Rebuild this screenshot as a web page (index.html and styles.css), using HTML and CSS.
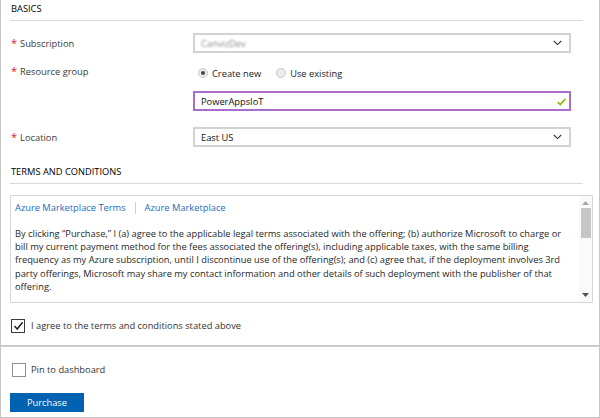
FILE: index.html
```html
<!DOCTYPE html>
<html lang="en">
<head>
<meta charset="utf-8">
<title>Create</title>
<link rel="stylesheet" href="styles.css">
</head>
<body>
<div class="blade">
  <section class="upper">
    <h2 class="section-title">BASICS</h2>
    <div class="form">
      <div class="row row-sub">
        <label class="lbl"><span class="req">*</span>Subscription</label>
        <div class="select">
          <span class="blur">CanvizDev</span>
          <svg class="chev" width="9" height="6" viewBox="0 0 9 6"><polyline points="0.8,1 4.5,4.6 8.2,1" fill="none" stroke="#333" stroke-width="1.1"/></svg>
        </div>
      </div>
      <div class="row row-rg">
        <label class="lbl"><span class="req">*</span>Resource group</label>
        <div class="ctl">
          <div class="radios">
            <span class="radio on"></span><span class="radio-text">Create new</span>
            <span class="radio"></span><span class="radio-text">Use existing</span>
          </div>
          <div class="input valid">
            <span>PowerAppsIoT</span>
            <svg class="ok" width="9" height="8" viewBox="0 0 9 8"><polyline points="0.8,4.2 3.3,6.6 8.3,1" fill="none" stroke="#7fba00" stroke-width="1.6"/></svg>
          </div>
        </div>
      </div>
      <div class="row row-loc">
        <label class="lbl"><span class="req">*</span>Location</label>
        <div class="select">
          <span>East US</span>
          <svg class="chev" width="9" height="6" viewBox="0 0 9 6"><polyline points="0.8,1 4.5,4.6 8.2,1" fill="none" stroke="#333" stroke-width="1.1"/></svg>
        </div>
      </div>
    </div>
    <h2 class="section-title terms-title">TERMS AND CONDITIONS</h2>
    <div class="terms-box">
      <div class="terms-content">
        <div class="links"><a class="link">Azure Marketplace Terms</a><span class="link-sep"></span><a class="link">Azure Marketplace</a></div>
        <p class="terms-text">By clicking “Purchase,” I (a) agree to the applicable legal terms associated with the offering; (b) authorize Microsoft to charge or bill my current payment method for the fees associated the offering(s), including applicable taxes, with the same billing frequency as my Azure subscription, until I discontinue use of the offering(s); and (c) agree that, if the deployment involves 3rd party offerings, Microsoft may share my contact information and other details of such deployment with the publisher of that offering.</p>
      </div>
      <div class="scrollbar">
        <svg class="arrow up" width="7" height="4" viewBox="0 0 7 4"><polygon points="0,4 7,4 3.5,0" fill="#a6a6a6"/></svg>
        <div class="thumb"></div>
        <div class="track-fill"></div>
        <svg class="arrow down" width="7" height="4" viewBox="0 0 7 4"><polygon points="0,0 7,0 3.5,4" fill="#505050"/></svg>
      </div>
    </div>
    <label class="check agree">
      <span class="box checked"><svg width="11" height="10" viewBox="0 0 11 10"><polyline points="1.5,5 4.2,8 9.6,1.2" fill="none" stroke="#222" stroke-width="1.5"/></svg></span>
      <span>I agree to the terms and conditions stated above</span>
    </label>
  </section>
  <section class="lower">
    <label class="check pin">
      <span class="box"></span>
      <span>Pin to dashboard</span>
    </label>
    <button class="purchase">Purchase</button>
  </section>
</div>
</body>
</html>
```
FILE: styles.css
```css
* { box-sizing: border-box; margin: 0; padding: 0; }
body {
  margin: 0;
  width: 600px;
  height: 418px;
  overflow: hidden;
  background: #fff;
  font-family: "Open Sans", "Noto Sans", sans-serif;
  font-size: 9.3px;
  color: #333;
}
.blade { width: 600px; }
.upper {
  height: 346px;
  border: 1px solid #c6c6c6;
  border-top: none;
  padding: 0 6px 0 9px;
}
.section-title {
  font-size: 9.3px;
  font-weight: 400;
  color: #000;
  line-height: 13px;
  padding: 2px 0 5px 1px;
  border-bottom: 1px solid #d9d9d9;
  margin-right: 10px;
}
.form { margin-top: 12px; }
.row {
  display: grid;
  grid-template-columns: 183px 378px;
  align-items: center;
}
.row-sub { margin-bottom: 12px; }
.row-rg { margin-bottom: 16px; align-items: start; }
.lbl {
  display: flex;
  align-items: center;
  padding-left: 1px;
  line-height: 13px;
  color: #3a3a3a;
}
.req {
  color: #e2141f;
  font-size: 11px;
  margin-right: 3px;
  position: relative;
  top: -1px;
}
.select, .input {
  height: 20px;
  display: flex;
  align-items: center;
  justify-content: space-between;
  padding: 0 7px 0 6px;
  border: 2px solid #d2d2d2;
  color: #111;
  background: #fff;
}
.blur { color: #8a8a8a; filter: blur(1.3px); }
.input.valid { border-color: #a76fcb; padding-right: 3px; }
.ok { margin-top: 1px; }
.radios {
  height: 16px;
  display: flex;
  align-items: center;
  padding-left: 5px;
  margin-bottom: 10px;
}
.radio {
  width: 10px;
  height: 10px;
  border-radius: 50%;
  background: #ececec;
  border: 1px solid #c9c9c9;
  display: flex;
  align-items: center;
  justify-content: center;
  margin-right: 4px;
}
.radio.on::after {
  content: "";
  width: 4px;
  height: 4px;
  border-radius: 50%;
  background: #444;
}
.radio-text { color: #222; margin-right: 15px; }
.terms-title { margin-top: 16px; }
.terms-box {
  margin-top: 11px;
  height: 108px;
  border: 1px solid #d6d6d6;
  display: flex;
}
.terms-content {
  flex: 1;
  padding: 5px 6px 0 4px;
}
.links {
  display: flex;
  align-items: center;
  line-height: 13px;
}
.link { color: #1a6cc2; text-decoration: none; }
.link-sep {
  width: 1px;
  height: 12px;
  background: #d0d0d0;
  margin: 0 9px;
}
.terms-text {
  margin-top: 13px;
  line-height: 13.2px;
  color: #262626;
}
.scrollbar {
  width: 13px;
  display: flex;
  flex-direction: column;
  align-items: center;
  background: #fafafa;
  padding: 5px 0 5px 0;
}
.arrow { flex: none; }
.thumb {
  width: 10px;
  height: 30px;
  background: #c6c6c6;
  margin-top: 3px;
}
.track-fill { flex: 1; }
.check {
  display: flex;
  align-items: center;
  line-height: 14px;
  color: #333;
}
.agree { margin-top: 16px; padding-left: 1px; }
.box {
  width: 14px;
  height: 14px;
  border: 1px solid #8a8a8a;
  background: #fff;
  display: flex;
  align-items: center;
  justify-content: center;
  margin-right: 6px;
  flex: none;
}
.box.checked { border-color: #3a3a3a; }
.lower {
  height: 72px;
  border: 1px solid #c6c6c6;
  border-top: 1px solid #d0d0d0;
  padding: 16px 0 0 9px;
}
.pin { padding-left: 2px; }
.pin .box { border-color: #8f8f8f; margin-right: 5px; }
.purchase {
  display: block;
  margin-top: 16px;
  width: 74px;
  height: 19px;
  background: #0062b0;
  border: none;
  color: #fff;
  font-family: inherit;
  font-size: 9.3px;
  line-height: 19px;
}
```
